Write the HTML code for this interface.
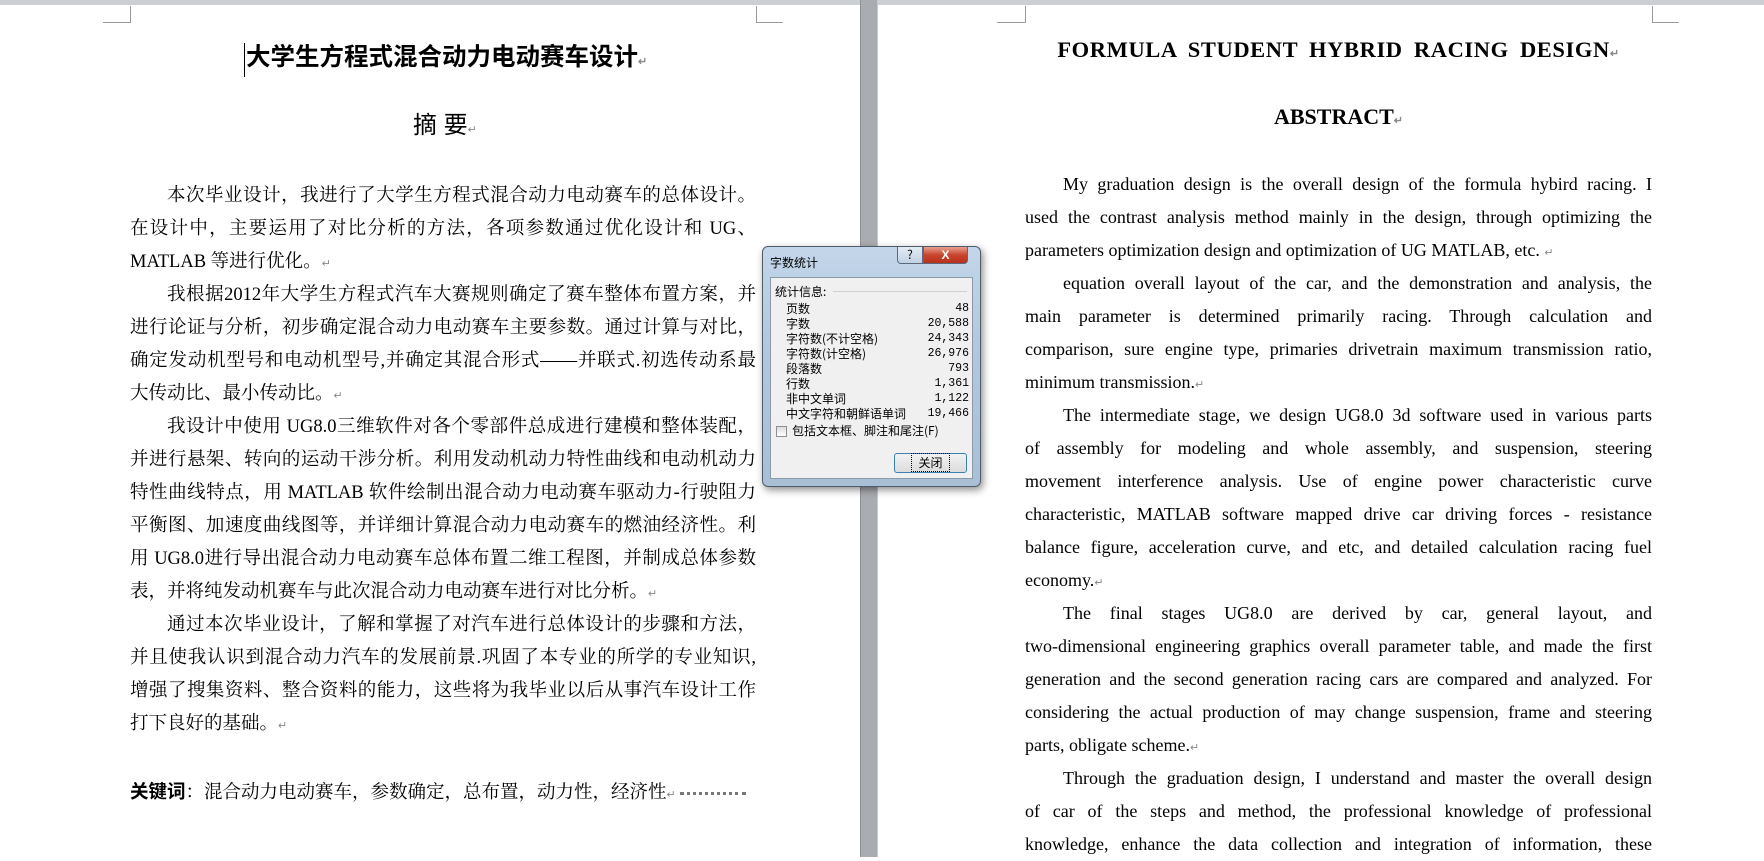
<!DOCTYPE html>
<html><head><meta charset="utf-8">
<style>
*{margin:0;padding:0;box-sizing:border-box}
body{width:1764px;height:857px;overflow:hidden;background:#fff;position:relative;font-family:"Liberation Serif","Noto Serif CJK SC",serif;color:#000}
.top{position:absolute;left:0;top:0;width:1764px;height:5px;background:#ccd0d5}
.gap{position:absolute;left:860px;top:0;width:18px;height:857px;background:#a9acb0;border-left:1px solid #8e9194;border-right:1px solid #c6c8cb}
.m{position:absolute;background:#9a9a9a}
.ln{position:absolute;height:33px;line-height:33px;white-space:nowrap;text-align:justify;text-align-last:justify}
.ln.l{text-align-last:left}
.cn{font-family:"Liberation Serif","Noto Serif CJK SC",serif;font-size:18.5px;left:130px;width:626px}
.en{font-size:18px;left:1025px;width:627px}
.i1{padding-left:37px}
.i2{padding-left:38px}
.pm{color:#888;font-size:11px}
.dlg{position:absolute;left:762px;top:246px;width:219px;height:241px;border:1px solid #4d5b6b;border-radius:6px;background:linear-gradient(#c3d6ea,#b3c8de 40%,#a9bfd6);box-shadow:2px 3px 8px rgba(0,0,0,.45);font-family:"Noto Sans CJK SC",sans-serif;font-size:12px}
.dlg .t{position:absolute;left:7px;top:7px;font-size:12px;color:#000}
.btn{position:absolute;top:0;height:17px;border:1px solid #5a6a7c;border-top:none}
.inner{position:absolute;left:7px;top:30px;width:203px;height:202px;background:#f0f0f0;border:1px solid #8a9aab}
.row{position:absolute;left:15px;width:183px;height:15px;line-height:15px}
.row span{position:absolute;right:0;top:0;font-family:"Liberation Mono",monospace;font-size:11.5px}
</style></head><body>
<div class="top"></div>
<div class="gap"></div>
<div class="m" style="left:130px;top:6px;width:1px;height:17px"></div>
<div class="m" style="left:103px;top:22px;width:28px;height:1px"></div>
<div class="m" style="left:756px;top:6px;width:1px;height:17px"></div>
<div class="m" style="left:756px;top:22px;width:27px;height:1px"></div>
<div class="m" style="left:1025px;top:6px;width:1px;height:17px"></div>
<div class="m" style="left:997px;top:22px;width:28px;height:1px"></div>
<div class="m" style="left:1652px;top:6px;width:1px;height:17px"></div>
<div class="m" style="left:1652px;top:22px;width:27px;height:1px"></div>

<div style="position:absolute;left:244px;top:43px;font-family:'Liberation Sans','Noto Sans CJK SC',sans-serif;font-weight:bold;font-size:24.5px;line-height:30px;white-space:nowrap;border-left:1.5px solid #000;padding-left:1px">大学生方程式混合动力电动赛车设计<span class="pm">↵</span></div>
<div style="position:absolute;left:413px;top:111px;font-family:'Liberation Sans','Noto Sans CJK SC',sans-serif;font-size:24px;line-height:30px;white-space:nowrap">摘 要<span class="pm">↵</span></div>

<div class="ln cn i1" style="top:180px">本次毕业设计，我进行了大学生方程式混合动力电动赛车的总体设计。</div>
<div class="ln cn" style="top:213px">在设计中，主要运用了对比分析的方法，各项参数通过优化设计和 UG、</div>
<div class="ln cn l" style="top:246px">MATLAB 等进行优化。<span class="pm">↵</span></div>
<div class="ln cn i1" style="top:279px">我根据2012年大学生方程式汽车大赛规则确定了赛车整体布置方案，并</div>
<div class="ln cn" style="top:312px">进行论证与分析，初步确定混合动力电动赛车主要参数。通过计算与对比，</div>
<div class="ln cn" style="top:345px">确定发动机型号和电动机型号,并确定其混合形式——并联式.初选传动系最</div>
<div class="ln cn l" style="top:378px">大传动比、最小传动比。<span class="pm">↵</span></div>
<div class="ln cn i1" style="top:411px">我设计中使用 UG8.0三维软件对各个零部件总成进行建模和整体装配，</div>
<div class="ln cn" style="top:444px">并进行悬架、转向的运动干涉分析。利用发动机动力特性曲线和电动机动力</div>
<div class="ln cn" style="top:477px">特性曲线特点，用 MATLAB 软件绘制出混合动力电动赛车驱动力-行驶阻力</div>
<div class="ln cn" style="top:510px">平衡图、加速度曲线图等，并详细计算混合动力电动赛车的燃油经济性。利</div>
<div class="ln cn" style="top:543px">用 UG8.0进行导出混合动力电动赛车总体布置二维工程图，并制成总体参数</div>
<div class="ln cn l" style="top:576px">表，并将纯发动机赛车与此次混合动力电动赛车进行对比分析。<span class="pm">↵</span></div>
<div class="ln cn i1" style="top:609px">通过本次毕业设计，了解和掌握了对汽车进行总体设计的步骤和方法，</div>
<div class="ln cn" style="top:642px">并且使我认识到混合动力汽车的发展前景.巩固了本专业的所学的专业知识,</div>
<div class="ln cn" style="top:675px">增强了搜集资料、整合资料的能力，这些将为我毕业以后从事汽车设计工作</div>
<div class="ln cn l" style="top:708px">打下良好的基础。<span class="pm">↵</span></div>
<div class="ln cn l" style="top:775px"><b style="font-family:'Liberation Sans','Noto Sans CJK SC',sans-serif;font-weight:600">关键词</b>：混合动力电动赛车，参数确定，总布置，动力性，经济性<span class="pm">↵</span> <span style="display:inline-block;width:66px;border-bottom:3px dotted #777;vertical-align:middle"></span></div>

<div style="position:absolute;left:1025px;width:627px;top:35px;text-align:center;font-weight:bold;font-size:22.5px;letter-spacing:0.6px;word-spacing:5px;line-height:30px;white-space:nowrap">FORMULA STUDENT HYBRID RACING DESIGN<span class="pm">↵</span></div>
<div style="position:absolute;left:1025px;width:627px;top:102px;text-align:center;font-weight:bold;font-size:22px;line-height:30px">ABSTRACT<span class="pm">↵</span></div>

<div class="ln en i2" style="top:168px">My graduation design is the overall design of the formula hybird racing. I</div>
<div class="ln en" style="top:201px">used the contrast analysis method mainly in the design, through optimizing the</div>
<div class="ln en l" style="top:234px">parameters optimization design and optimization of UG MATLAB, etc. <span class="pm">↵</span></div>
<div class="ln en i2" style="top:267px">equation overall layout of the car, and the demonstration and analysis, the</div>
<div class="ln en" style="top:300px">main parameter is determined primarily racing. Through calculation and</div>
<div class="ln en" style="top:333px">comparison, sure engine type, primaries drivetrain maximum transmission ratio,</div>
<div class="ln en l" style="top:366px">minimum transmission.<span class="pm">↵</span></div>
<div class="ln en i2" style="top:399px">The intermediate stage, we design UG8.0 3d software used in various parts</div>
<div class="ln en" style="top:432px">of assembly for modeling and whole assembly, and suspension, steering</div>
<div class="ln en" style="top:465px">movement interference analysis. Use of engine power characteristic curve</div>
<div class="ln en" style="top:498px">characteristic, MATLAB software mapped drive car driving forces - resistance</div>
<div class="ln en" style="top:531px">balance figure, acceleration curve, and etc, and detailed calculation racing fuel</div>
<div class="ln en l" style="top:564px">economy.<span class="pm">↵</span></div>
<div class="ln en i2" style="top:597px">The final stages UG8.0 are derived by car, general layout, and</div>
<div class="ln en" style="top:630px">two-dimensional engineering graphics overall parameter table, and made the first</div>
<div class="ln en" style="top:663px">generation and the second generation racing cars are compared and analyzed. For</div>
<div class="ln en" style="top:696px">considering the actual production of may change suspension, frame and steering</div>
<div class="ln en l" style="top:729px">parts, obligate scheme.<span class="pm">↵</span></div>
<div class="ln en i2" style="top:762px">Through the graduation design, I understand and master the overall design</div>
<div class="ln en" style="top:795px">of car of the steps and method, the professional knowledge of professional</div>
<div class="ln en" style="top:828px">knowledge, enhance the data collection and integration of information, these</div>

<div class="dlg">
  <div class="t">字数统计</div>
  <div class="btn" style="left:134px;width:26px;background:linear-gradient(#e4ecf5,#c2d1e2);border-radius:0 0 0 4px;text-align:center;font-size:12px;line-height:16px">?</div>
  <div class="btn" style="left:160px;width:45px;background:linear-gradient(#e9a08e,#c8452d 50%,#b8301c);border-radius:0 0 4px 0;color:#fff;text-align:center;font-weight:bold;font-size:12px;line-height:16px;font-family:'Liberation Sans',sans-serif">X</div>
  <div class="inner">
    <div style="position:absolute;left:4px;top:5px">统计信息:</div>
    <div style="position:absolute;left:62px;top:13px;width:134px;height:1px;background:#d0d0d0"></div>
    <div class="row" style="top:23px">页数<span>48</span></div>
    <div class="row" style="top:38px">字数<span>20,588</span></div>
    <div class="row" style="top:53px">字符数(不计空格)<span>24,343</span></div>
    <div class="row" style="top:68px">字符数(计空格)<span>26,976</span></div>
    <div class="row" style="top:83px">段落数<span>793</span></div>
    <div class="row" style="top:98px">行数<span>1,361</span></div>
    <div class="row" style="top:113px">非中文单词<span>1,122</span></div>
    <div class="row" style="top:128px">中文字符和朝鲜语单词<span>19,466</span></div>
    <div style="position:absolute;left:5px;top:148px;width:11px;height:11px;border:1px solid #8f8f8f;background:linear-gradient(#ddd,#fff)"></div>
    <div style="position:absolute;left:21px;top:145px;line-height:15px">包括文本框、脚注和尾注(F)</div>
    <div style="position:absolute;left:123px;top:175px;width:73px;height:20px;border:1px solid #3c7fb1;border-radius:3px;background:linear-gradient(#f2f2f2,#dcdcdc);text-align:center;line-height:17px"><span style="border:1px dotted #000;padding:0 6px">关闭</span></div>
  </div>
</div>
</body></html>
